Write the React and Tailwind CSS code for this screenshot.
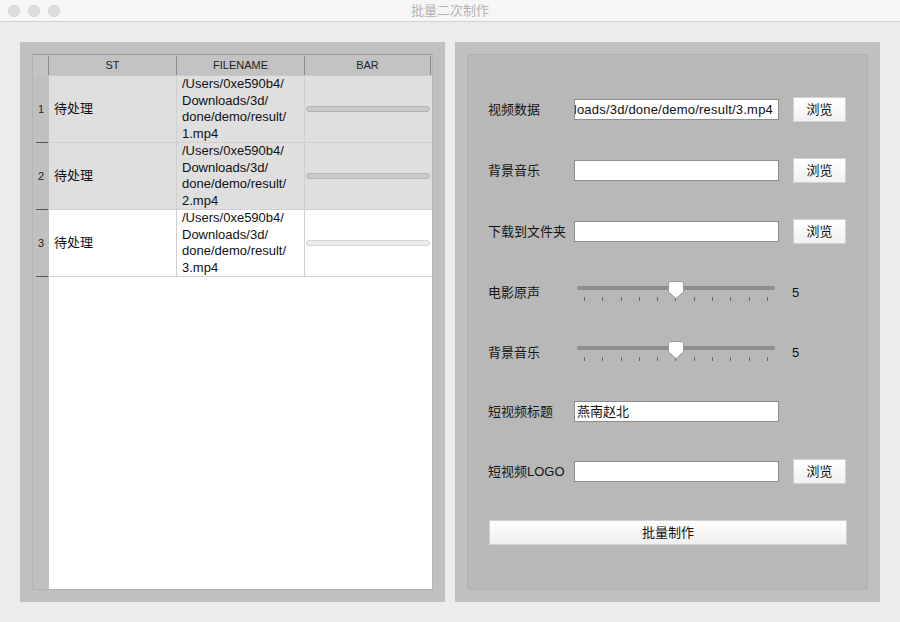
// Batch re-edit window: job table on the left, settings form on the right.

const FONT = { fontFamily: '"Liberation Sans", "Noto Sans CJK SC", sans-serif' };

const jobs = [
  { id: 1, status: "待处理", file: "1.mp4", shade: true },
  { id: 2, status: "待处理", file: "2.mp4", shade: true },
  { id: 3, status: "待处理", file: "3.mp4", shade: false },
];

function TitleBar() {
  return (
    <div className="relative flex h-[22px] items-center border-b border-[#d3d3d3] bg-[#f6f6f6]">
      <div className="ml-[8px] flex gap-[8px]">
        <span className="h-[12px] w-[12px] rounded-full border border-[#d4d4d4] bg-[#dedede]" />
        <span className="h-[12px] w-[12px] rounded-full border border-[#d4d4d4] bg-[#dedede]" />
        <span className="h-[12px] w-[12px] rounded-full border border-[#d4d4d4] bg-[#dedede]" />
      </div>
      <div className="absolute inset-x-0 text-center text-[13px] text-[#b4b4b4]">批量二次制作</div>
    </div>
  );
}

function JobRow({ job }) {
  const bg = job.shade ? "bg-[#dfdfdf]" : "bg-white";
  return (
    <div className="flex h-[67px]">
      <div className="flex w-[16px] flex-col bg-[#c0c0c0]">
        <div className="flex flex-1 items-center pl-[5px] text-[11px] text-[#222]">{job.id}</div>
        <div className="ml-[3px] h-px w-[12px] bg-[#555]" />
      </div>
      <div className={`flex w-[128px] items-center border-b border-r border-[#d0d0d0] pl-[5px] text-[13px] text-[#111] ${bg}`}>
        {job.status}
      </div>
      <div className={`flex w-[128px] flex-col justify-center border-b border-r border-[#d0d0d0] pl-[5px] text-[13px] leading-[16.5px] text-[#111] ${bg}`}>
        <div>/Users/0xe590b4/</div>
        <div>Downloads/3d/</div>
        <div>done/demo/result/</div>
        <div>{job.file}</div>
      </div>
      <div className={`flex w-[127px] items-center border-b border-[#d0d0d0] px-[1px] ${bg}`}>
        <div
          className={`h-[6px] w-[124px] rounded-full border ${
            job.shade ? "border-[#b5b5b5] bg-[#cacaca]" : "border-[#d4d4d4] bg-[#ececec]"
          }`}
        />
      </div>
    </div>
  );
}

function JobTable() {
  return (
    <div className="flex h-[536px] w-[401px] flex-col border border-[#b4b4b4] border-t-[#9a9a9a]">
      <div className="flex h-[21px] border-b border-[#c8c8c8] bg-[#c2c2c2] pt-px text-[11px] text-[#222]">
        <div className="w-[16px] border-r border-[#8a8a8a]" />
        <div className="flex w-[128px] items-center justify-center border-r border-[#8a8a8a]">ST</div>
        <div className="flex w-[128px] items-center justify-center border-r border-[#8a8a8a]">FILENAME</div>
        <div className="flex w-[126px] items-center justify-center border-r border-[#8a8a8a]">BAR</div>
      </div>
      {jobs.map((job) => (
        <JobRow key={job.id} job={job} />
      ))}
      <div className="flex flex-1">
        <div className="w-[16px] bg-[#c0c0c0]" />
        <div className="flex-1 bg-white" />
      </div>
    </div>
  );
}

function BrowseButton() {
  return (
    <button className="ml-[14px] flex h-[25px] w-[53px] items-center justify-center border border-[#d2d2d2] bg-gradient-to-b from-white to-[#f1f1f1] text-[13px] text-[#111]">
      浏览
    </button>
  );
}

function TextField({ value, tail }) {
  return (
    <div
      className={`flex h-[21px] w-[205px] items-center overflow-hidden border border-[#8e8e8e] bg-white text-[13px] text-[#111] ${
        tail ? "justify-end pr-[5px] tracking-[0.2px]" : "pl-[2px]"
      }`}
    >
      <span className="whitespace-nowrap">{value}</span>
    </div>
  );
}

function Slider({ value }) {
  const ticks = Array.from({ length: 11 }, (_, i) => i);
  return (
    <>
      <div className="relative ml-[3px] h-[25px] w-[198px]">
        <div className="mt-[6px] h-[4px] rounded-full bg-[#8e8e8e]" />
        <div className="mt-[7px] flex justify-between px-[7px]">
          {ticks.map((t) => (
            <span key={t} className="h-[4px] w-px bg-[#666]" />
          ))}
        </div>
        <svg className="absolute left-[91px] top-[1px]" width="16" height="18" viewBox="0 0 16 18">
          <path d="M2.5 0.5 H13.5 Q15.5 0.5 15.5 2.5 V11 L8 17.5 L0.5 11 V2.5 Q0.5 0.5 2.5 0.5 Z" fill="#fff" stroke="#9a9a9a" />
        </svg>
      </div>
      <span className="ml-[17px] text-[13px] text-[#111]">{value}</span>
    </>
  );
}

function FormRow({ label, className, children }) {
  return (
    <div className={`flex h-[25px] items-center ${className}`}>
      <div className="w-[86px] text-[13px] text-[#151515]">{label}</div>
      {children}
    </div>
  );
}

function SettingsForm() {
  return (
    <div className="flex h-[536px] w-[401px] flex-col rounded-[3px] border border-[#b1b1b1] bg-[#b8b8b8] pl-[20px] pt-[42px]">
      <FormRow label="视频数据">
        <TextField value="Downloads/3d/done/demo/result/3.mp4" tail />
        <BrowseButton />
      </FormRow>
      <FormRow label="背景音乐" className="mt-[36px]">
        <TextField value="" />
        <BrowseButton />
      </FormRow>
      <FormRow label="下载到文件夹" className="mt-[36px]">
        <TextField value="" />
        <BrowseButton />
      </FormRow>
      <FormRow label="电影原声" className="mt-[36px]">
        <Slider value={5} />
      </FormRow>
      <FormRow label="背景音乐" className="mt-[35px]">
        <Slider value={5} />
      </FormRow>
      <FormRow label="短视频标题" className="mt-[34px]">
        <TextField value="燕南赵北" />
      </FormRow>
      <FormRow label="短视频LOGO" className="mt-[35px]">
        <TextField value="" />
        <BrowseButton />
      </FormRow>
      <button className="ml-[1px] mt-[36px] flex h-[25px] w-[358px] items-center justify-center border border-[#d2d2d2] bg-gradient-to-b from-[#ffffff] to-[#efefef] text-[13px] text-[#111]">
        批量制作
      </button>
    </div>
  );
}

export default function App() {
  return (
    <div className="flex h-[622px] w-[900px] flex-col bg-[#ececec]" style={FONT}>
      <TitleBar />
      <div className="flex gap-[10px] px-[20px] pt-[20px]">
        <div className="flex h-[560px] w-[425px] bg-[#c0c0c0] p-[12px]">
          <JobTable />
        </div>
        <div className="flex h-[560px] w-[425px] bg-[#c0c0c0] p-[12px]">
          <SettingsForm />
        </div>
      </div>
    </div>
  );
}
